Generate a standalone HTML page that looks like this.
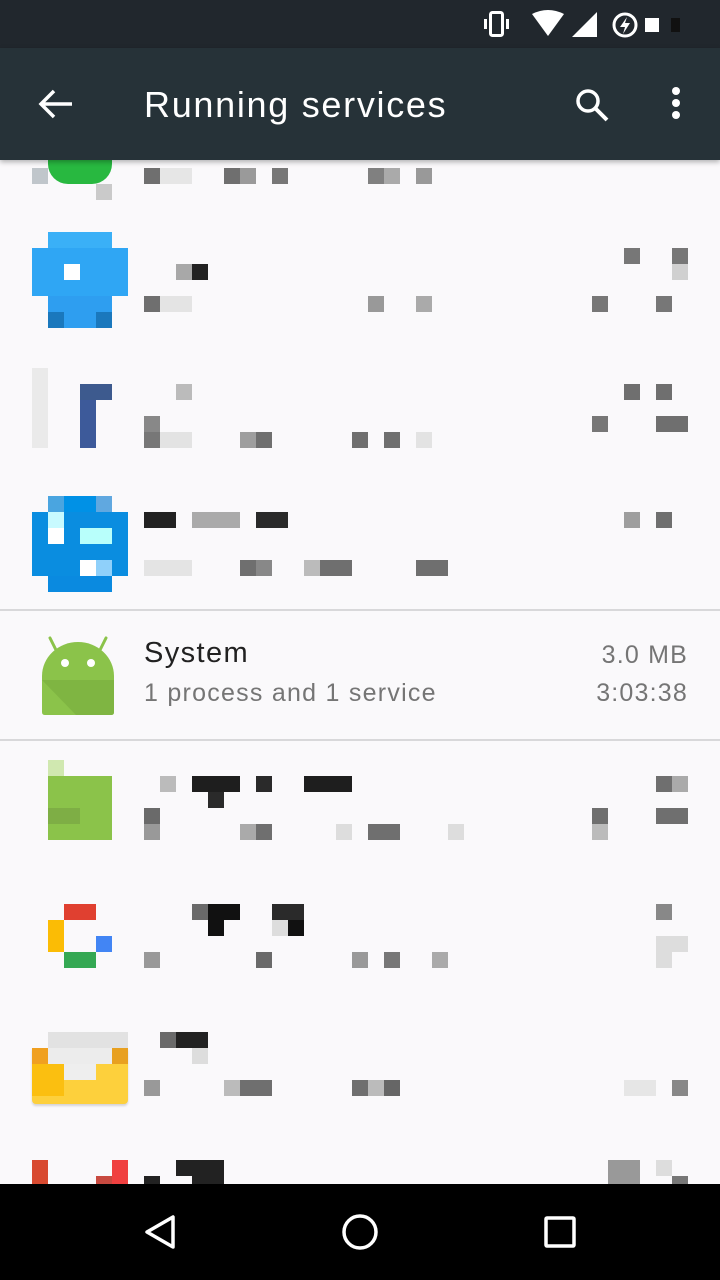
<!DOCTYPE html>
<html><head><meta charset="utf-8"><style>
*{margin:0;padding:0;box-sizing:border-box}
body{width:720px;height:1280px;position:relative;overflow:hidden;background:#faf9fb;font-family:"Liberation Sans",sans-serif}
.b{position:absolute}
#sb{position:absolute;left:0;top:0;width:720px;height:48px;background:#21272d}
#tb{position:absolute;left:0;top:48px;width:720px;height:112px;background:#263238;box-shadow:0 2px 5px rgba(0,0,0,.3);z-index:5}
#nav{position:absolute;left:0;top:1184px;width:720px;height:96px;background:#000}
.t{position:absolute;white-space:nowrap}
</style></head><body>
<div id="sb">
<svg class="b" style="left:480px;top:8px" width="200" height="32" viewBox="0 0 200 32">
<rect x="4" y="11" width="3" height="10" fill="#fff"/>
<rect x="10.5" y="4.5" width="12" height="23" rx="2" fill="none" stroke="#fff" stroke-width="3"/>
<rect x="26" y="11" width="3" height="10" fill="#fff"/>
<path d="M52 6 Q68 -2 84 6 L68 28 Z" fill="#fff"/>
<path d="M92 29 L117 4 L117 29 Z" fill="#fff"/>
<circle cx="145" cy="17" r="11" fill="none" stroke="#fff" stroke-width="3"/>
<path d="M147 9 L140 19 L145 19 L143 26 L150 15 L145 15 Z" fill="#fff"/>
<rect x="165" y="10" width="14" height="14" fill="#fff"/>
<rect x="191" y="10" width="9" height="14" fill="#111"/>
</svg>
</div>
<div id="tb">
<svg class="b" style="left:36px;top:38px" width="40" height="36" viewBox="0 0 40 36"><path d="M36 18 H6 M18 5 L5 18 L18 31" stroke="#fff" stroke-width="3.5" fill="none"/></svg>
<div class="t" style="left:144px;top:36px;font-size:36px;color:#fff;letter-spacing:1.7px">Running services</div>
<svg class="b" style="left:572px;top:38px" width="40" height="40" viewBox="0 0 40 40"><circle cx="16" cy="15" r="10" fill="none" stroke="#fff" stroke-width="3.5"/><path d="M23 22 L35 34" stroke="#fff" stroke-width="4"/></svg>
<svg class="b" style="left:668px;top:38px" width="16" height="40" viewBox="0 0 16 40"><circle cx="8" cy="5" r="4" fill="#fff"/><circle cx="8" cy="17" r="4" fill="#fff"/><circle cx="8" cy="29" r="4" fill="#fff"/></svg>
</div>

<!-- row1 partial -->
<div class="b" style="left:48px;top:150px;width:64px;height:34px;background:#28b840;border-radius:0 0 20px 20px"></div>
<div class="b" style="left:32px;top:168px;width:16px;height:16px;background:#c0c6cb"></div>
<div class="b" style="left:96px;top:184px;width:16px;height:16px;background:#cacaca"></div>
<div class="b" style="left:144px;top:168px;width:16px;height:16px;background:#6f6f6f"></div>
<div class="b" style="left:160px;top:168px;width:32px;height:16px;background:#e6e6e6"></div>
<div class="b" style="left:224px;top:168px;width:16px;height:16px;background:#6f6f6f"></div>
<div class="b" style="left:240px;top:168px;width:16px;height:16px;background:#9a9a9a"></div>
<div class="b" style="left:272px;top:168px;width:16px;height:16px;background:#777"></div>
<div class="b" style="left:368px;top:168px;width:16px;height:16px;background:#808080"></div>
<div class="b" style="left:384px;top:168px;width:16px;height:16px;background:#aaa"></div>
<div class="b" style="left:416px;top:168px;width:16px;height:16px;background:#999"></div>

<!-- row2 -->
<div class="b" style="left:48px;top:232px;width:64px;height:16px;background:#3ab0f7"></div>
<div class="b" style="left:32px;top:248px;width:96px;height:48px;background:#2fa6f4"></div>
<div class="b" style="left:48px;top:296px;width:64px;height:32px;background:#2e9ef0"></div>
<div class="b" style="left:48px;top:312px;width:16px;height:16px;background:#1a78bd"></div>
<div class="b" style="left:96px;top:312px;width:16px;height:16px;background:#1a78bd"></div>
<div class="b" style="left:64px;top:264px;width:16px;height:16px;background:#fff"></div>
<div class="b" style="left:176px;top:264px;width:16px;height:16px;background:#a8a8a8"></div>
<div class="b" style="left:192px;top:264px;width:16px;height:16px;background:#222"></div>
<div class="b" style="left:144px;top:296px;width:16px;height:16px;background:#6f6f6f"></div>
<div class="b" style="left:160px;top:296px;width:32px;height:16px;background:#e4e4e4"></div>
<div class="b" style="left:368px;top:296px;width:16px;height:16px;background:#999"></div>
<div class="b" style="left:416px;top:296px;width:16px;height:16px;background:#aaa"></div>
<div class="b" style="left:624px;top:248px;width:16px;height:16px;background:#777"></div>
<div class="b" style="left:672px;top:248px;width:16px;height:16px;background:#777"></div>
<div class="b" style="left:672px;top:264px;width:16px;height:16px;background:#d0d0d0"></div>
<div class="b" style="left:592px;top:296px;width:16px;height:16px;background:#777"></div>
<div class="b" style="left:656px;top:296px;width:16px;height:16px;background:#777"></div>

<!-- row3 -->
<div class="b" style="left:32px;top:368px;width:16px;height:80px;background:#eaeaea"></div>
<div class="b" style="left:80px;top:384px;width:32px;height:16px;background:#3d5a8e"></div>
<div class="b" style="left:80px;top:400px;width:16px;height:48px;background:#3d5a9a"></div>
<div class="b" style="left:176px;top:384px;width:16px;height:16px;background:#bbb"></div>
<div class="b" style="left:144px;top:416px;width:16px;height:16px;background:#888"></div>
<div class="b" style="left:144px;top:432px;width:16px;height:16px;background:#777"></div>
<div class="b" style="left:160px;top:432px;width:32px;height:16px;background:#e3e3e3"></div>
<div class="b" style="left:240px;top:432px;width:16px;height:16px;background:#9e9e9e"></div>
<div class="b" style="left:256px;top:432px;width:16px;height:16px;background:#6f6f6f"></div>
<div class="b" style="left:352px;top:432px;width:16px;height:16px;background:#6f6f6f"></div>
<div class="b" style="left:384px;top:432px;width:16px;height:16px;background:#6f6f6f"></div>
<div class="b" style="left:416px;top:432px;width:16px;height:16px;background:#e3e3e3"></div>
<div class="b" style="left:624px;top:384px;width:16px;height:16px;background:#6f6f6f"></div>
<div class="b" style="left:656px;top:384px;width:16px;height:16px;background:#6f6f6f"></div>
<div class="b" style="left:592px;top:416px;width:16px;height:16px;background:#777"></div>
<div class="b" style="left:656px;top:416px;width:32px;height:16px;background:#6f6f6f"></div>

<!-- row4 -->
<div class="b" style="left:48px;top:496px;width:64px;height:16px;background:#0091e6"></div>
<div class="b" style="left:48px;top:496px;width:16px;height:16px;background:#4aa5e0"></div>
<div class="b" style="left:96px;top:496px;width:16px;height:16px;background:#60a8e0"></div>
<div class="b" style="left:32px;top:512px;width:96px;height:64px;background:#0a8de0"></div>
<div class="b" style="left:48px;top:576px;width:64px;height:16px;background:#0a8ae0"></div>
<div class="b" style="left:48px;top:512px;width:16px;height:16px;background:#c8faff"></div>
<div class="b" style="left:48px;top:528px;width:16px;height:16px;background:#fff"></div>
<div class="b" style="left:80px;top:528px;width:32px;height:16px;background:#b8fffb"></div>
<div class="b" style="left:80px;top:560px;width:16px;height:16px;background:#fff"></div>
<div class="b" style="left:96px;top:560px;width:16px;height:16px;background:#8fd0fa"></div>
<div class="b" style="left:144px;top:512px;width:32px;height:16px;background:#222"></div>
<div class="b" style="left:192px;top:512px;width:48px;height:16px;background:#aaa"></div>
<div class="b" style="left:256px;top:512px;width:32px;height:16px;background:#2a2a2a"></div>
<div class="b" style="left:144px;top:560px;width:48px;height:16px;background:#e4e4e4"></div>
<div class="b" style="left:240px;top:560px;width:16px;height:16px;background:#6f6f6f"></div>
<div class="b" style="left:256px;top:560px;width:16px;height:16px;background:#888"></div>
<div class="b" style="left:304px;top:560px;width:16px;height:16px;background:#bbb"></div>
<div class="b" style="left:320px;top:560px;width:32px;height:16px;background:#6f6f6f"></div>
<div class="b" style="left:416px;top:560px;width:32px;height:16px;background:#6f6f6f"></div>
<div class="b" style="left:624px;top:512px;width:16px;height:16px;background:#9e9e9e"></div>
<div class="b" style="left:656px;top:512px;width:16px;height:16px;background:#6f6f6f"></div>

<!-- System row -->
<div class="b" style="left:0;top:609px;width:720px;height:2px;background:#d8d8da"></div>
<div class="b" style="left:0;top:739px;width:720px;height:2px;background:#d8d8da"></div>
<svg class="b" style="left:36px;top:632px" width="88" height="84" viewBox="0 0 88 84">
<path d="M14 6 L20 18 M70 6 L64 18" stroke="#8bc34a" stroke-width="3" stroke-linecap="round"/>
<path d="M6 80 V44 A36 34 0 0 1 78 44 V80 Q78 83 75 83 H9 Q6 83 6 80 Z" fill="#8bc34a"/>
<path d="M6 48 H78 V80 Q78 83 75 83 H40 Z" fill="#7fb542"/>
<circle cx="29" cy="31" r="4" fill="#fff"/><circle cx="55" cy="31" r="4" fill="#fff"/>
</svg>
<div class="t" style="left:144px;top:637px;font-size:29px;color:#212121;letter-spacing:1.4px">System</div>
<div class="t" style="left:144px;top:679px;font-size:25px;color:#757575;letter-spacing:1.25px">1 process and 1 service</div>
<div class="t" style="right:32px;top:641px;font-size:25px;color:#757575;letter-spacing:1.2px">3.0 MB</div>
<div class="t" style="right:32px;top:679px;font-size:25px;color:#757575;letter-spacing:1.2px">3:03:38</div>

<!-- row6 -->
<div class="b" style="left:48px;top:760px;width:16px;height:16px;background:#d0e8b0"></div>
<div class="b" style="left:48px;top:776px;width:64px;height:64px;background:#8bc34a"></div>
<div class="b" style="left:48px;top:808px;width:32px;height:16px;background:#7eae45"></div>
<div class="b" style="left:160px;top:776px;width:16px;height:16px;background:#bbb"></div>
<div class="b" style="left:192px;top:776px;width:48px;height:16px;background:#1e1e1e"></div>
<div class="b" style="left:256px;top:776px;width:16px;height:16px;background:#2a2a2a"></div>
<div class="b" style="left:304px;top:776px;width:48px;height:16px;background:#1e1e1e"></div>
<div class="b" style="left:208px;top:792px;width:16px;height:16px;background:#2a2a2a"></div>
<div class="b" style="left:144px;top:808px;width:16px;height:16px;background:#6a6a6a"></div>
<div class="b" style="left:144px;top:824px;width:16px;height:16px;background:#999"></div>
<div class="b" style="left:240px;top:824px;width:16px;height:16px;background:#aaa"></div>
<div class="b" style="left:256px;top:824px;width:16px;height:16px;background:#6f6f6f"></div>
<div class="b" style="left:336px;top:824px;width:16px;height:16px;background:#ddd"></div>
<div class="b" style="left:368px;top:824px;width:32px;height:16px;background:#6f6f6f"></div>
<div class="b" style="left:448px;top:824px;width:16px;height:16px;background:#ddd"></div>
<div class="b" style="left:656px;top:776px;width:16px;height:16px;background:#6f6f6f"></div>
<div class="b" style="left:672px;top:776px;width:16px;height:16px;background:#aaa"></div>
<div class="b" style="left:592px;top:808px;width:16px;height:16px;background:#6f6f6f"></div>
<div class="b" style="left:656px;top:808px;width:32px;height:16px;background:#6f6f6f"></div>
<div class="b" style="left:592px;top:824px;width:16px;height:16px;background:#bbb"></div>

<!-- row7 -->
<div class="b" style="left:64px;top:904px;width:32px;height:16px;background:#e04030"></div>
<div class="b" style="left:48px;top:920px;width:16px;height:32px;background:#fbbc05"></div>
<div class="b" style="left:96px;top:936px;width:16px;height:16px;background:#4285f4"></div>
<div class="b" style="left:64px;top:952px;width:32px;height:16px;background:#34a853"></div>
<div class="b" style="left:192px;top:904px;width:16px;height:16px;background:#6a6a6a"></div>
<div class="b" style="left:208px;top:904px;width:32px;height:16px;background:#111"></div>
<div class="b" style="left:272px;top:904px;width:32px;height:16px;background:#2a2a2a"></div>
<div class="b" style="left:208px;top:920px;width:16px;height:16px;background:#111"></div>
<div class="b" style="left:272px;top:920px;width:16px;height:16px;background:#ddd"></div>
<div class="b" style="left:288px;top:920px;width:16px;height:16px;background:#111"></div>
<div class="b" style="left:144px;top:952px;width:16px;height:16px;background:#999"></div>
<div class="b" style="left:256px;top:952px;width:16px;height:16px;background:#6a6a6a"></div>
<div class="b" style="left:352px;top:952px;width:16px;height:16px;background:#999"></div>
<div class="b" style="left:384px;top:952px;width:16px;height:16px;background:#777"></div>
<div class="b" style="left:432px;top:952px;width:16px;height:16px;background:#aaa"></div>
<div class="b" style="left:656px;top:904px;width:16px;height:16px;background:#888"></div>
<div class="b" style="left:656px;top:936px;width:32px;height:16px;background:#ddd"></div>
<div class="b" style="left:656px;top:952px;width:16px;height:16px;background:#ddd"></div>

<!-- row8 -->
<div class="b" style="left:48px;top:1032px;width:80px;height:16px;background:#e2e2e2"></div>
<div class="b" style="left:32px;top:1048px;width:96px;height:56px;background:#fdd03c;border-radius:0 0 4px 4px;box-shadow:0 2px 2px rgba(0,0,0,.15)"></div>
<div class="b" style="left:32px;top:1048px;width:16px;height:16px;background:#f0a020"></div>
<div class="b" style="left:112px;top:1048px;width:16px;height:16px;background:#e8a020"></div>
<div class="b" style="left:32px;top:1064px;width:32px;height:32px;background:#fbbf10"></div>
<div class="b" style="left:48px;top:1048px;width:64px;height:16px;background:#ececec"></div>
<div class="b" style="left:64px;top:1064px;width:32px;height:16px;background:#eee"></div>
<div class="b" style="left:160px;top:1032px;width:16px;height:16px;background:#6a6a6a"></div>
<div class="b" style="left:176px;top:1032px;width:32px;height:16px;background:#222"></div>
<div class="b" style="left:192px;top:1048px;width:16px;height:16px;background:#ddd"></div>
<div class="b" style="left:144px;top:1080px;width:16px;height:16px;background:#999"></div>
<div class="b" style="left:224px;top:1080px;width:16px;height:16px;background:#bbb"></div>
<div class="b" style="left:240px;top:1080px;width:32px;height:16px;background:#6f6f6f"></div>
<div class="b" style="left:352px;top:1080px;width:16px;height:16px;background:#6f6f6f"></div>
<div class="b" style="left:368px;top:1080px;width:16px;height:16px;background:#bbb"></div>
<div class="b" style="left:384px;top:1080px;width:16px;height:16px;background:#666"></div>
<div class="b" style="left:624px;top:1080px;width:32px;height:16px;background:#e6e6e6"></div>
<div class="b" style="left:672px;top:1080px;width:16px;height:16px;background:#888"></div>

<!-- row9 partial -->
<div class="b" style="left:32px;top:1160px;width:16px;height:24px;background:#d84a30"></div>
<div class="b" style="left:112px;top:1160px;width:16px;height:24px;background:#f04040"></div>
<div class="b" style="left:96px;top:1176px;width:16px;height:8px;background:#c84a40"></div>
<div class="b" style="left:176px;top:1160px;width:48px;height:16px;background:#222"></div>
<div class="b" style="left:192px;top:1176px;width:32px;height:8px;background:#222"></div>
<div class="b" style="left:144px;top:1176px;width:16px;height:8px;background:#222"></div>
<div class="b" style="left:608px;top:1160px;width:32px;height:24px;background:#999"></div>
<div class="b" style="left:656px;top:1160px;width:16px;height:16px;background:#ddd"></div>
<div class="b" style="left:672px;top:1176px;width:16px;height:8px;background:#777"></div>

<div id="nav">
<svg class="b" style="left:140px;top:28px" width="40" height="40" viewBox="0 0 40 40"><path d="M33 5 L33 35 L7 20 Z" fill="none" stroke="#fff" stroke-width="3.5" stroke-linejoin="round"/></svg>
<svg class="b" style="left:340px;top:28px" width="40" height="40" viewBox="0 0 40 40"><circle cx="20" cy="20" r="16" fill="none" stroke="#fff" stroke-width="3.5"/></svg>
<svg class="b" style="left:540px;top:28px" width="40" height="40" viewBox="0 0 40 40"><rect x="6" y="6" width="28" height="28" rx="1" fill="none" stroke="#fff" stroke-width="3.5"/></svg>
</div>
</body></html>
